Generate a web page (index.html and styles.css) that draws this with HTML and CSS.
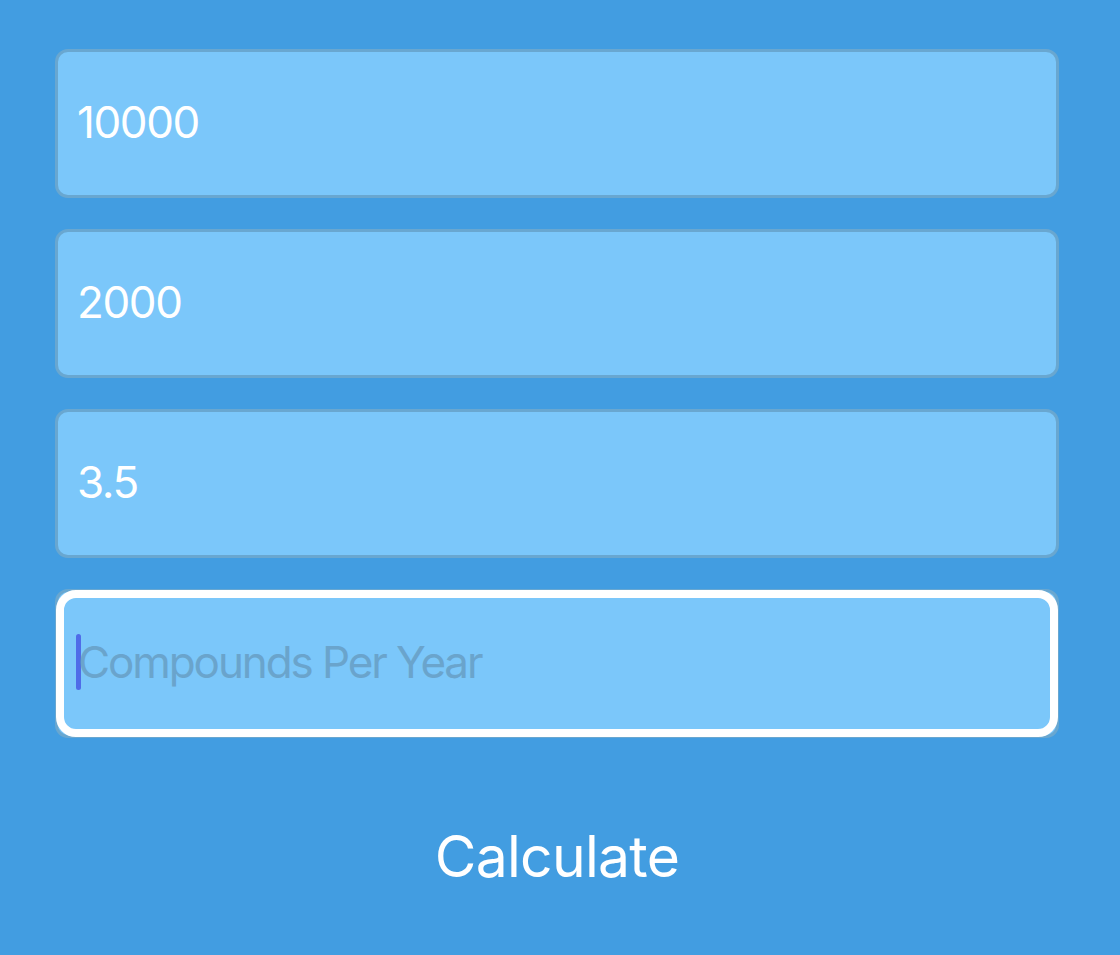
FILE: index.html
```html
<!DOCTYPE html>
<html lang="en">
<head>
<meta charset="utf-8">
<title>Compound Interest</title>
<link rel="stylesheet" href="styles.css">
</head>
<body>
<main class="form">
  <div class="field"><span class="value">10000</span></div>
  <div class="field"><span class="value">2000</span></div>
  <div class="field"><span class="value">3.5</span></div>
  <div class="field field-focused"><span class="caret"></span><span class="placeholder">Compounds Per Year</span></div>
  <div class="button-row"><button class="calc-btn" type="button">Calculate</button></div>
</main>
</body>
</html>
```
FILE: styles.css
```css
html, body {
  margin: 0;
  padding: 0;
  background: #429de1;
  height: 100%;
}
body {
  font-family: Inter, "Liberation Sans", sans-serif;
}
.form {
  display: flex;
  flex-direction: column;
  gap: 31px;
  padding: 49px 61px 0 55px;
}
.field {
  position: relative;
  box-sizing: border-box;
  height: 149px;
  background: #7bc7fa;
  border: 3px solid #69a7d0;
  border-radius: 13px;
  display: flex;
  align-items: center;
  padding-left: 19px;
}
.value {
  color: #ffffff;
  font-size: 44px;
  line-height: 1;
  letter-spacing: -1.4px;
  margin-top: -4px;
}
.field-focused {
  padding-left: 18px;
}
.field-focused::after {
  content: "";
  position: absolute;
  top: -2px;
  left: -2px;
  right: -2px;
  bottom: -2px;
  border: 8px solid #ffffff;
  border-radius: 20px;
  pointer-events: none;
}
.caret {
  width: 5px;
  height: 56px;
  border-radius: 3px;
  background: #4f6ce8;
  margin-top: -4px;
  margin-right: -3px;
}
.placeholder {
  color: #6aa4cc;
  font-size: 44px;
  line-height: 1;
  letter-spacing: -2.1px;
  margin-top: -4px;
}
.button-row {
  display: flex;
  justify-content: center;
  margin-top: 54px;
}
.calc-btn {
  background: none;
  border: none;
  padding: 0;
  color: #ffffff;
  font-family: Inter, "Liberation Sans", sans-serif;
  font-size: 57px;
  line-height: 68px;
  letter-spacing: -0.7px;
}
```
